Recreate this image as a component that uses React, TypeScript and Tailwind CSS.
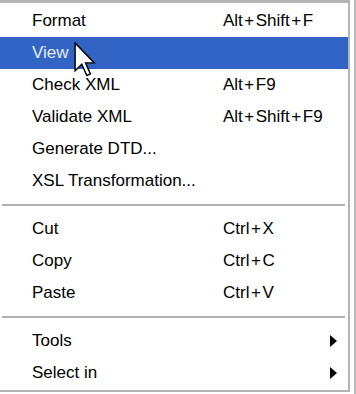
import React from "react";

type Item =
  | { kind: "item"; label: string; shortcut?: string; submenu?: boolean; active?: boolean }
  | { kind: "sep" };

const items: Item[] = [
  { kind: "item", label: "Format", shortcut: "Alt+Shift+F" },
  { kind: "item", label: "View", active: true },
  { kind: "item", label: "Check XML", shortcut: "Alt+F9" },
  { kind: "item", label: "Validate XML", shortcut: "Alt+Shift+F9" },
  { kind: "item", label: "Generate DTD..." },
  { kind: "item", label: "XSL Transformation..." },
  { kind: "sep" },
  { kind: "item", label: "Cut", shortcut: "Ctrl+X" },
  { kind: "item", label: "Copy", shortcut: "Ctrl+C" },
  { kind: "item", label: "Paste", shortcut: "Ctrl+V" },
  { kind: "sep" },
  { kind: "item", label: "Tools", submenu: true },
  { kind: "item", label: "Select in", submenu: true },
];

function Cursor() {
  // classic arrow pointer, scaled up
  return (
    <svg
      className="absolute left-[74px] top-[42px]"
      width="22"
      height="36"
      viewBox="0 0 12 20"
    >
      <path
        d="M0.5 0.5 L0.5 16 L4.2 12.4 L7 18.6 L9 17.7 L6.3 11.6 L11.2 11.6 Z"
        fill="#ffffff"
        stroke="#000000"
        strokeWidth="0.8"
        strokeLinejoin="miter"
      />
    </svg>
  );
}

// Tahoma's plus sign is wider than Arial's, pad it a bit
function Shortcut({ text }: { text: string }) {
  const parts = text.split("+");
  return (
    <span className="whitespace-nowrap">
      {parts.map((p, i) => (
        <React.Fragment key={i}>
          {i > 0 && <span className="mx-[1.5px]">+</span>}
          {p}
        </React.Fragment>
      ))}
    </span>
  );
}

export default function App() {
  return (
    <div
      className="relative w-[356px] h-[394px] bg-white overflow-hidden flex"
      style={{ fontFamily: '"Liberation Sans", Arial, sans-serif' }}
    >
      <div className="w-[350px] h-[392px] border-t-[3px] border-r-2 border-b-2 border-[#b4b4b4] pt-[2px] flex flex-col">
        {items.map((it, i) =>
          it.kind === "sep" ? (
            <div key={i} className="h-[16px] flex items-center pl-[2px] pr-[3px]">
              <div className="h-[2px] w-full bg-[#b0b0b0]" />
            </div>
          ) : (
            <div
              key={i}
              className={
                "h-[32px] flex items-center text-[17px] " +
                (it.active ? "bg-[#3164c4] text-[#e4ecf8]" : "text-black")
              }
            >
              <span className="pl-[32px] w-[223px] shrink-0 whitespace-nowrap">{it.label}</span>
              {it.shortcut && <Shortcut text={it.shortcut} />}
              {it.submenu && (
                <svg className="ml-auto mr-[11px]" width="7" height="12" viewBox="0 0 7 12">
                  <path d="M0 0 L7 6 L0 12 Z" fill="#000" />
                </svg>
              )}
            </div>
          )
        )}
      </div>
      <div className="w-[4px]" />
      <div className="w-[2px] h-full bg-[#b8b8b8]" />
      <Cursor />
    </div>
  );
}
